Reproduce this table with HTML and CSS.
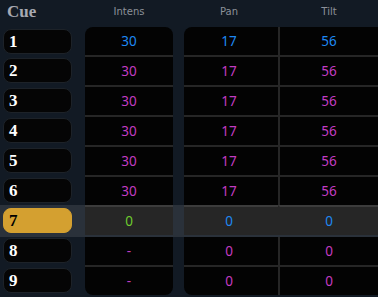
FILE: index.html
```html
<!DOCTYPE html>
<html>
  <head>
    <meta charset="utf-8" />
    <title>Cue List</title>
    <link rel="stylesheet" href="styles.css">
  </head>
  <body>
    <div id="sheet">
      <div class="head">
        <div class="cue-title">Cue</div>
        <div class="ch intens">Intens</div>
        <div class="ch pan">Pan</div>
        <div class="ch tilt">Tilt</div>
      </div>

      <div class="row first">
        <div class="cue"><span class="pill">1</span></div>
        <div class="cell intens blue">30</div>
        <div class="cell pan blue">17</div>
        <div class="cell tilt blue">56</div>
      </div>
      <div class="row">
        <div class="cue"><span class="pill">2</span></div>
        <div class="cell intens pink">30</div>
        <div class="cell pan pink">17</div>
        <div class="cell tilt pink">56</div>
      </div>
      <div class="row">
        <div class="cue"><span class="pill">3</span></div>
        <div class="cell intens pink">30</div>
        <div class="cell pan pink">17</div>
        <div class="cell tilt pink">56</div>
      </div>
      <div class="row">
        <div class="cue"><span class="pill">4</span></div>
        <div class="cell intens pink">30</div>
        <div class="cell pan pink">17</div>
        <div class="cell tilt pink">56</div>
      </div>
      <div class="row">
        <div class="cue"><span class="pill">5</span></div>
        <div class="cell intens pink">30</div>
        <div class="cell pan pink">17</div>
        <div class="cell tilt pink">56</div>
      </div>
      <div class="row">
        <div class="cue"><span class="pill">6</span></div>
        <div class="cell intens pink">30</div>
        <div class="cell pan pink">17</div>
        <div class="cell tilt pink">56</div>
      </div>
      <!-- current cue -->
      <div class="row active">
        <div class="cue"><span class="pill">7</span></div>
        <div class="cell intens green">0</div>
        <div class="cell pan blue">0</div>
        <div class="cell tilt blue">0</div>
      </div>
      <div class="row">
        <div class="cue"><span class="pill">8</span></div>
        <div class="cell intens pink">-</div>
        <div class="cell pan pink">0</div>
        <div class="cell tilt pink">0</div>
      </div>
      <div class="row last">
        <div class="cue"><span class="pill">9</span></div>
        <div class="cell intens pink">-</div>
        <div class="cell pan pink">0</div>
        <div class="cell tilt pink">0</div>
      </div>
    </div>
  </body>
</html>
```

FILE: styles.css
```css
:root {
  --bg: #121a24;
  --cell: #030303;
  --line: #262626;
  --blue: #1e88f2;
  --pink: #c23cc2;
  --green: #6ecb2e;
  --gold: #d4a030;
}

body,
html {
  margin: 0;
  padding: 0;
  width: 100%;
  height: 100%;
  background: var(--bg);
  overflow: hidden;
}

#sheet {
  display: flex;
  flex-direction: column;
}

/* Header row */
.head {
  display: flex;
  height: 27px;
  align-items: center;
}

.cue-title {
  width: 78px;
  padding-left: 7px;
  font-family: "Liberation Serif", serif;
  font-weight: bold;
  font-size: 17px;
  color: #a7a9b2;
  margin-top: -4px;
}

.ch {
  font-family: "DejaVu Sans", sans-serif;
  font-size: 10px;
  color: #8c9199;
  text-align: center;
  margin-top: -5px;
}

/* Column widths shared by header and rows */
.intens {
  width: 88px;
}

.pan {
  width: 90px;
  padding-right: 4px;
  margin-left: 11px;
}

.tilt {
  flex: 1;
  border-left: 2px solid var(--line);
}

.ch.tilt {
  border-left-color: transparent;
}

/* Data rows */
.row {
  display: flex;
  height: 30px;
}

.row.first {
  height: 28px;
}

.cue {
  width: 85px;
  display: flex;
  align-items: center;
}

.pill {
  margin-left: 3px;
  width: 62px;
  height: 23px;
  padding-left: 5px;
  border: 1px solid #1d2228;
  border-radius: 8px;
  background: #050505;
  color: #fff;
  font-family: "Liberation Serif", serif;
  font-weight: bold;
  font-size: 17px;
  line-height: 24px;
}

.cell {
  background: var(--cell);
  border-top: 2px solid var(--line);
  font-family: "Noto Sans", sans-serif;
  font-size: 13.5px;
  line-height: 28px;
  text-align: center;
}

.first .cell {
  border-top: none;
}

.first .intens {
  border-radius: 8px 8px 0 0;
}

.first .pan {
  border-top-left-radius: 8px;
}

.last .intens {
  border-radius: 0 0 8px 8px;
}

.last .pan {
  border-bottom-left-radius: 8px;
}

.blue {
  color: var(--blue);
}

.pink {
  color: var(--pink);
}

.green {
  color: var(--green);
}

/* Highlighted current cue */
.row.active {
  background: #2a313a;
  box-shadow: 0 2px 0 #2a313a;
  position: relative;
}

.active .cell {
  background: #262626;
  border-top-color: #3c3c3c;
}

.active + .row .cell {
  border-top-color: #3c3c3c;
}

.active .pill {
  background: var(--gold);
  border-color: var(--gold);
  color: #000;
}
```
